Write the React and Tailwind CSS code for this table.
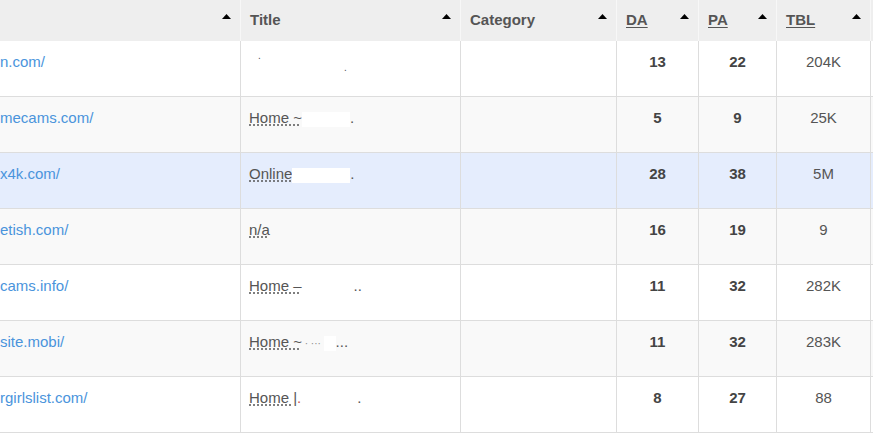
import React from 'react';

const cols = 'grid grid-cols-[241px_220px_156px_82px_78px_94px_1fr]';

function Arrow() {
    return (
        <svg width="9" height="5" viewBox="0 0 9 5" className="mt-[5px] shrink-0">
            <polygon points="4.5,0 9,5 0,5" fill="#000" />
        </svg>
    );
}

function HeadCell({ label, underline, last }) {
    return (
        <div className={`flex justify-between items-start pl-[9px] pr-[9px] pt-[9px] h-[41px] ${last ? '' : 'border-r border-[#f7f7f7]'}`}>
            <span className={`font-bold text-[#555] leading-5 pt-px ${underline ? 'underline underline-offset-2' : ''}`}>{label}</span>
            <Arrow />
        </div>
    );
}

function Redact({ w }) {
    return <span className="inline-block h-[15px] bg-white align-middle" style={{ width: w }} />;
}

function Abbr({ children }) {
    return <span className="underline decoration-dotted decoration-[#555] underline-offset-2">{children}</span>;
}

const rows = [
    {
        url: 'n.com/',
        title: (
            <span className="relative block h-5">
                <span className="absolute left-[9px] top-[-6px] text-[10px]">.</span>
                <span className="absolute left-[95px] top-[6px] text-[10px]">.</span>
            </span>
        ),
        da: 13, pa: 22, tbl: '204K', bg: 'bg-white',
    },
    { url: 'mecams.com/', title: <><Abbr>Home ~</Abbr><Redact w={48} />.</>, da: 5, pa: 9, tbl: '25K', bg: 'bg-[#f9f9f9]' },
    { url: 'x4k.com/', title: <><Abbr>Online</Abbr><Redact w={58} />.</>, da: 28, pa: 38, tbl: '5M', bg: 'bg-[#e5edfd]' },
    { url: 'etish.com/', title: <Abbr>n/a</Abbr>, da: 16, pa: 19, tbl: '9', bg: 'bg-[#f9f9f9]' },
    { url: 'cams.info/', title: <><Abbr>Home –</Abbr><span className="inline-block w-[52px]" />..</>, da: 11, pa: 32, tbl: '282K', bg: 'bg-white' },
    { url: 'site.mobi/', title: <><Abbr>Home ~</Abbr><span className="text-[10px] text-[#888]"> · ··· </span><Redact w={12} />...</>, da: 11, pa: 32, tbl: '283K', bg: 'bg-[#f9f9f9]' },
    { url: 'rgirlslist.com/', title: <><Abbr>Home |</Abbr><span className="text-[#c55]">.</span><span className="inline-block w-[56px]" />.</>, da: 8, pa: 27, tbl: '88', bg: 'bg-white' },
];

export default function App() {
    return (
        <div className="w-[873px] h-[434px] overflow-hidden bg-white text-[15px] text-[#555]" style={{ fontFamily: '"Liberation Sans", Arial, sans-serif' }}>
            <div className={`${cols} bg-[#eeeeee]`}>
                <HeadCell label="" />
                <HeadCell label="Title" />
                <HeadCell label="Category" />
                <HeadCell label="DA" underline />
                <HeadCell label="PA" underline />
                <HeadCell label="TBL" underline />
                <div />
            </div>
            {rows.map((r, i) => (
                <div key={i} className={`${cols} ${r.bg} h-[56px] border-b border-[#dddddd]`}>
                    <div className="border-r border-[#dddddd] pt-[11px] leading-5 whitespace-nowrap overflow-hidden">
                        <a href="#" className="text-[#4a94dc]">{r.url}</a>
                    </div>
                    <div className="border-r border-[#dddddd] pt-[11px] pl-[8px] leading-5 whitespace-nowrap overflow-hidden">
                        {r.title}
                    </div>
                    <div className="border-r border-[#dddddd]" />
                    <div className="border-r border-[#dddddd] pt-[11px] leading-5 text-center font-bold text-[#444]">{r.da}</div>
                    <div className="border-r border-[#dddddd] pt-[11px] leading-5 text-center font-bold text-[#444]">{r.pa}</div>
                    <div className="border-r border-[#dddddd] pt-[11px] leading-5 text-center">{r.tbl}</div>
                    <div />
                </div>
            ))}
        </div>
    );
}
